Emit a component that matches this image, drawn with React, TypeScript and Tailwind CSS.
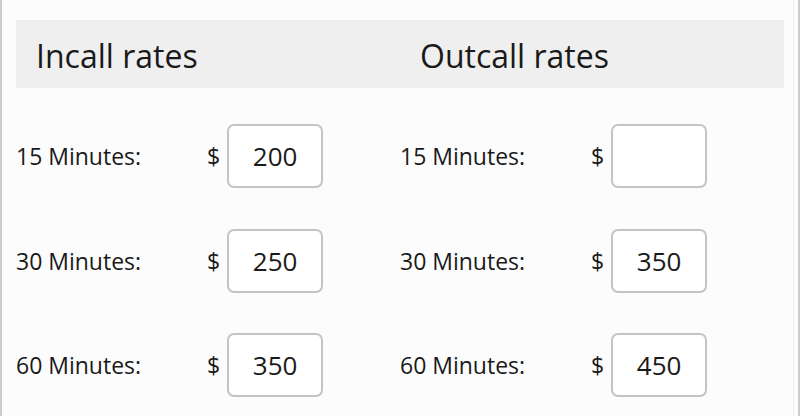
const rows = [
  { label: "15 Minutes:", incall: "200", outcall: "" },
  { label: "30 Minutes:", incall: "250", outcall: "350" },
  { label: "60 Minutes:", incall: "350", outcall: "450" },
];

function RateField({ label, value }: { label: string; value: string }) {
  return (
    <div className="flex items-center">
      <span className="w-[191px] shrink-0 text-[23px]">{label}</span>
      <span className="text-[23px] mr-[7px]">$</span>
      <input
        type="text"
        defaultValue={value}
        className="w-[96px] h-[64px] rounded-[7px] border-2 border-[#c4c4c4] bg-white text-center text-[26px] text-[#1a1a1a] outline-none"
        style={{ fontFamily: "'Open Sans', sans-serif" }}
      />
    </div>
  );
}

export default function App() {
  return (
    <div
      className="h-[416px] w-[800px] overflow-hidden border-x-2 border-[#cbcbcb] bg-[#fcfcfc] text-[#1a1a1a]"
      style={{ fontFamily: "'Open Sans', sans-serif" }}
    >
      <div className="mr-[4px] h-full border-r border-[#efefef] pl-[14px] pr-[9px] pt-[20px]">
        <div className="grid h-[68px] grid-cols-2 items-center bg-[#efefef] pt-[4px]">
          <h2 className="pl-[20px] text-[32px] leading-none">Incall rates</h2>
          <h2 className="pl-[20px] text-[32px] leading-none">Outcall rates</h2>
        </div>

        <div className="pt-[16px]">
          {rows.map((row) => (
            <div key={row.label} className="grid h-[104.5px] grid-cols-2 items-center">
              <RateField label={row.label} value={row.incall} />
              <RateField label={row.label} value={row.outcall} />
            </div>
          ))}
        </div>
      </div>
    </div>
  );
}
